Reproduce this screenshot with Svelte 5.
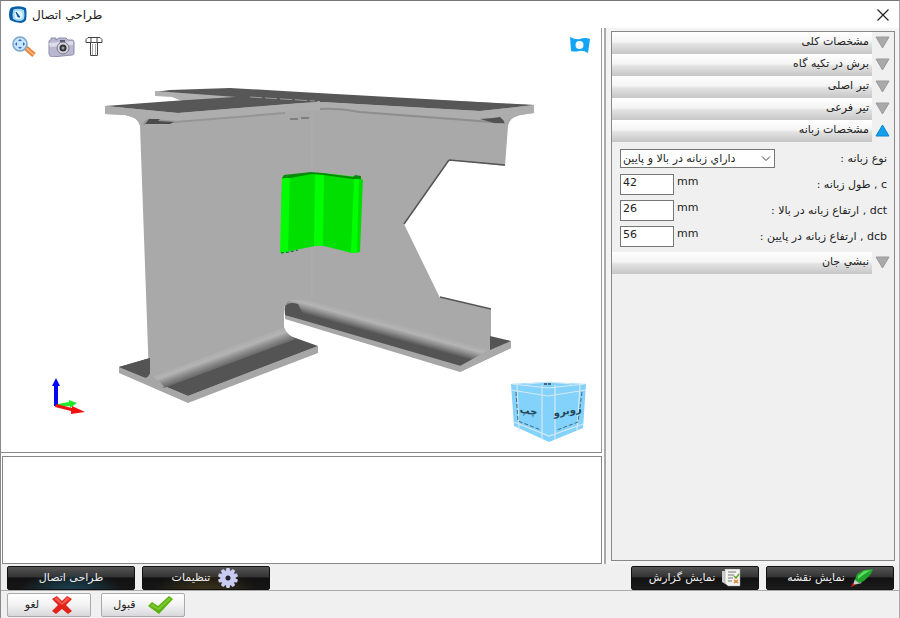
<script>
  let sections = $state([
    { title: 'مشخصات کلی', open: false },
    { title: 'برش در تکیه گاه', open: false },
    { title: 'تیر اصلی', open: false },
    { title: 'تیر فرعی', open: false },
    { title: 'مشخصات زبانه', open: true, form: true },
    { title: 'نبشي جان', open: false }
  ]);

  let fields = $state([
    { id: 'c', label: 'c , طول زبانه :', value: '42' },
    { id: 'dct', label: 'dct , ارتفاع زبانه در بالا :', value: '26' },
    { id: 'dcb', label: 'dcb , ارتفاع زبانه در پایین :', value: '56' }
  ]);

  const teeth = [0, 36, 72, 108, 144, 180, 216, 252, 288, 324];
</script>

<div class="window">
  <header class="titlebar">
    <svg class="logo" width="18" height="18" viewBox="0 0 18 18" aria-hidden="true">
      <path d="M4 1q7-2 13 1 1 6 0 12-2 3-5 3-6 0-11-3-2-5 0-11 1-2 3-2z" fill="#0c5da5" />
      <path d="M6 3q5-1 9 1 1 5 0 9-2 2-4 2-4 0-7-2-1-4 0-8 0-2 2-2z" fill="#9fdcfa" />
      <path d="M6 5q4-1 7 1 1 4 0 6-4 2-7 0-1-4 0-7z" fill="#e6f8ff" />
      <path d="M7 6l4 5-2 0z" fill="#0c5da5" stroke="#0c5da5" />
    </svg>
    <h1>طراحي اتصال</h1>
    <button class="close" aria-label="بستن">
      <svg width="12" height="12" viewBox="0 0 12 12"><path d="M.5.5l11 11M11.5.5l-11 11" stroke="#222" stroke-width="1.2" /></svg>
    </button>
  </header>

  <main class="workspace">
    <div class="left">
      <section class="viewport">
        <svg class="scene" viewBox="1 28 600 424" preserveAspectRatio="xMinYMin meet" aria-hidden="true">
          <defs>
            <linearGradient id="filletL" gradientUnits="userSpaceOnUse" x1="216" y1="350" x2="223" y2="369">
              <stop offset="0" stop-color="#a9a9a9" /><stop offset=".35" stop-color="#b4b4b4" />
              <stop offset=".6" stop-color="#8c8c8c" /><stop offset="1" stop-color="#545454" />
            </linearGradient>
            <linearGradient id="filletR" gradientUnits="userSpaceOnUse" x1="389" y1="321" x2="384" y2="339">
              <stop offset="0" stop-color="#a9a9a9" /><stop offset=".3" stop-color="#b4b4b4" />
              <stop offset=".55" stop-color="#8c8c8c" /><stop offset=".85" stop-color="#545454" />
            </linearGradient>
          </defs>

          <!-- secondary beam -->
          <path d="M285 312L460 364L511 341V348L460 372L285 319z" fill="#a6a6a6" />
          <path d="M182 101L230 92L320 94L534 105V113L520 115Q510 117 508 126L505 166L449 160L404 224L440 298L491 309L490 350L478 356L300 308L285 302L284 120H182Z" fill="#a9a9a9" />
          <path d="M290 299L302 298L490 348L480 356L461 366L285 315Q283 302 290 300z" fill="url(#filletR)" />
          <path d="M286 306Q289 301 298 304L306 320L285 315z" fill="#545454" />
          <path d="M440 297L491 309V336L440 320z" fill="#a9a9a9" />
          <path d="M478 356L490 349L511 341V348L460 372V366z" fill="#a9a9a9" />
          <path d="M490 336L511 341L490 350z" fill="#545454" />
          <path d="M155 92L170 90L230 88L300 92L534 105L480 111L320 102L250 102z" fill="#575757" />
          <path d="M155 91L182 93L250 98L215 101H182L172 97L155 96z" fill="#b0b0b0" />

          <!-- main beam -->
          <path d="M119 367L188 396L318 346V353L188 403L119 373z" fill="#a6a6a6" />
          <path d="M119 367L150 358V376L290 336L318 346L188 396z" fill="#545454" />
          <path d="M105 106L178 112L320 101V300H290Q284 303 284 311V328Q285 334 292 337L160 384L149 377L140 126Q138 117 125 115L105 114z" fill="#a9a9a9" />
          <path d="M149 378L284 327Q287 335 296 339L164 388z" fill="url(#filletL)" />
          <path d="M150 358V374Q149 378 144 377L119 367z" fill="#545454" />
          <path d="M149 374Q149 378 143 378L165 388L160 382L151 375z" fill="#a6a6a6" />
          <path d="M105 106L172 101L250 96L320 99L316 102L178 113z" fill="#575757" />
          <path d="M105 106L178 113L300 103L324 102L480 111L534 105V113L520 115L500 123L480 120L330 109L285 112L150 126L138 119L125 115L105 114z" fill="#adadad" />
          <path d="M312 112V298" stroke="#aeaeae" stroke-width="1" />
          <path d="M144 125Q145 119 153 120L176 122L285 113" fill="none" stroke="#959595" stroke-width="2" />
          <path d="M146 123L149 119H160L158 121L174 122L170 124H145z" fill="#4b4b4b" />
          <path d="M320 109Q340 108 360 112L505 123" fill="none" stroke="#8e8e8e" stroke-width="2" />
          <path d="M480 119L493 118L500 117L504 121V123H494z" fill="#515151" />
          <path d="M250 97L315 101" stroke="#999" stroke-width="1" stroke-dasharray="12 3" />
          <path d="M290 119H298M301 118H309" stroke="#555" stroke-width="1" />
          <path d="M449 160L404 224M449 160L505 165M440 297L491 309" fill="none" stroke="#555" stroke-width="1.5" />

          <!-- web angle -->
          <path d="M282 178L311 173L323 173L358 177L363 180L360 252L352 253L324 246H315L281 253z" fill="#00df00" />
          <path d="M282 179L290 177L288 252L280 253zM315 174H324L323 246H314zM354 177H359L357 253H351z" fill="#0f0" />
          <path d="M282 178L284 175L311 172L322 173L353 177L355 175L361 176V179L353 179L323 175L312 174L290 178z" fill="#078b07" />
          <path d="M281 253L290 252L298 250" fill="none" stroke="#063" stroke-dasharray="3 2" />

          <!-- axes -->
          <path d="M58 404L69 402V400L77 403L70 408V406L58 407z" fill="#1eea28" />
          <path d="M54 406V386H52L56 378L60 386H58V406z" fill="#0008f0" />
          <path d="M56 404L72 408V406L85 412L71 414V411L55 407z" fill="#f01010" />

          <!-- view cube -->
          <path d="M511 384L548 382L586 384L583 428L549 442L514 426z" fill="#82d2fc" />
          <path d="M511 390L548 396L586 390M517 384L519 431M542 385V440M555 385V440M580 385L577 431M514 422L549 436L583 424M512 384L548 388L585 384M526 384L548 382L572 384" fill="none" stroke="#d5e9f0" stroke-width="1.2" />
          <path d="M516 392L518 421L541 430M582 392L578 422L557 430" fill="none" stroke="#456b7c" stroke-dasharray="4 2" />
          <path d="M544 384h8" stroke="#345" stroke-width="1.5" stroke-dasharray="3 1" />
          <text x="528" y="414" text-anchor="middle" transform="rotate(10 528 414)">چپ</text>
          <text x="568" y="414" text-anchor="middle" transform="rotate(-10 568 414)">روبرو</text>
        </svg>

        <div class="tools">
          <button aria-label="بزرگنمایی">
            <svg width="26" height="22" viewBox="0 0 26 22">
              <path d="M15 12l8 7" stroke="#e8843b" stroke-width="5" /><path d="M15 12l8 7" stroke="#ffc08a" stroke-width="1.5" />
              <circle cx="9" cy="8" r="7" fill="#c5e5fb" stroke="#7aa3cc" stroke-width="1.5" />
              <path d="M9 3l2 2H7zM9 13l2-2H7zM4 8l2-2v4zM14 8l-2-2v4z" fill="#3565bd" />
            </svg>
          </button>
          <button aria-label="تصویر">
            <svg width="28" height="20" viewBox="0 0 28 20">
              <path d="M2 4q0-1 2-1V1h5v2l3-2h7l2 2h4q2 0 2 2v11q0 2-2 2L5 20q-2 0-3-3z" fill="#b9b8d0" stroke="#8d8ca8" />
              <path d="M2 6l24-2v4L3 10z" fill="#dcdcea" /><path d="M13 3h5v2h-5z" fill="#58586e" />
              <circle cx="16" cy="11" r="6" fill="#d4d4dc" stroke="#77778b" /><circle cx="16" cy="11" r="3.5" fill="#333" />
              <circle cx="16" cy="11" r="1.5" fill="#91a6ad" />
            </svg>
          </button>
          <button aria-label="پیچ">
            <svg width="18" height="20" viewBox="0 0 18 20">
              <path d="M3 .5h12l2 2v3H1v-3zM6 1v5M12 1v5M5.500 5.500v13h7v-13" fill="#fff" stroke="#444" /><path d="M7.500 7v11M10.500 7v11" stroke="#aaa" />
            </svg>
          </button>
        </div>

        <button class="flag" aria-label="نما">
          <svg width="20" height="18" viewBox="0 0 20 18">
            <path d="M0 1q6 3 10 2 5-2 10 0l-2 14q-5-3-9-2t-8 0z" fill="#12a5f5" /><circle cx="9.500" cy="9" r="4" fill="#f4fcff" />
          </svg>
        </button>
      </section>
      <section class="output" aria-label="پیام ها"></section>
    </div>

    <aside class="side">
      <div class="accordion" dir="rtl">
        {#each sections as s}
          <button class="head" aria-expanded={s.open} onclick={() => (s.open = !s.open)}>
            <svg width="15" height="13" viewBox="0 0 15 13" aria-hidden="true">
              {#if s.open}
                <path d="M7.500 1L14 12H1z" fill="#12a0ee" stroke="#0c84cc" stroke-linejoin="round" />
              {:else}
                <path d="M1 1h13L7.500 12z" fill="#a9a9a9" stroke="#9a9a9a" stroke-linejoin="round" />
              {/if}
            </svg>
            <span>{s.title}</span>
          </button>
          {#if s.form && s.open}
            <div class="form">
              <div class="row">
                <label for="kind">نوع زبانه :</label>
                <div class="pick" dir="ltr">
                  <select id="kind">
                    <option>داراي زبانه در بالا و پایین</option>
                    <option>بدون زبانه</option>
                  </select>
                  <svg width="10" height="6" viewBox="0 0 10 6" aria-hidden="true"><path d="M1 .5l4 4 4-4" fill="none" stroke="#444" /></svg>
                </div>
              </div>
              {#each fields as f}
                <div class="row">
                  <label for={f.id}>{f.label}</label>
                  <div class="measure" dir="ltr">
                    <input id={f.id} type="text" bind:value={f.value} />
                    <span>mm</span>
                  </div>
                </div>
              {/each}
            </div>
          {/if}
        {/each}
      </div>
    </aside>
  </main>

  <nav class="actions">
    <button class="dark blue"><span>طراحی اتصال</span></button>
    <button class="dark amber">
      <span>تنظیمات</span>
      <svg width="24" height="20" viewBox="-12 -10 24 20" aria-hidden="true">
        {#each teeth as a}
          <path d="M-1.500-10h3l1 4h-5z" fill="#c9cbf0" transform="rotate({a})" />
        {/each}
        <circle r="7" fill="#c9cbf0" /><circle r="2.500" fill="#22222c" />
      </svg>
    </button>
    <span class="spacer"></span>
    <button class="dark">
      <span>نمایش گزارش</span>
      <svg width="20" height="19" viewBox="0 0 20 19" aria-hidden="true">
        <path d="M1 2h15v14H6l-5-3z" fill="#ccc" /><path d="M4 0h15v17H7l-3-3z" fill="#f2f2ee" stroke="#999" stroke-width=".5" />
        <path d="M7 3h8M7 6h6M7 9h5M7 12h4" stroke="#777" /><path d="M13 7l2 2 3-4" fill="none" stroke="#6aa63a" stroke-width="1.5" />
        <path d="M13 11l4 3m0-3l-4 3" stroke="#e8792c" stroke-width="1.5" />
      </svg>
    </button>
    <button class="dark">
      <span>نمایش نقشه</span>
      <svg width="22" height="18" viewBox="0 0 22 18" aria-hidden="true">
        <path d="M2 16l2-6 7 4z" fill="#ccc" /><path d="M0 18l2-4 2 2z" fill="#e22" />
        <path d="M4 11L6 5q3-2 7-4l9-1-2 5-7 7-5 2z" fill="#1fa52b" /><path d="M7 7l6-5 7-1-8 5-5 4z" fill="#62dc62" />
      </svg>
    </button>
  </nav>

  <footer>
    <button class="light">
      <span>لغو</span>
      <svg width="22" height="18" viewBox="0 0 22 18" aria-hidden="true">
        <path d="M1 3l5-3 5 5 5-5 5 3-6 6 6 6-4 3-6-5-6 5-4-3 6-6z" fill="#e2231a" /><path d="M3 3l3-2 5 6 5-6 3 2-8 6z" fill="#f5584c" />
      </svg>
    </button>
    <button class="light">
      <span>قبول</span>
      <svg width="25" height="18" viewBox="0 0 25 18" aria-hidden="true">
        <path d="M0 10l4-4 6 4L21 0l4 3-14 15z" fill="#5fb112" /><path d="M2 10l3-2 5 4L21 2l2 1-12 11z" fill="#79c92b" />
      </svg>
    </button>
  </footer>
</div>

<style>
  :global(body) { margin: 0; }
  .window {
    display: flex;
    flex-direction: column;
    box-sizing: border-box;
    min-height: 100vh;
    border-top: 1px solid #777;
    border-left: 1px solid #888;
    border-right: 1px solid #aaa;
    background: #f0f0f0;
    color: #222;
    font: 11px/16px "DejaVu Sans", sans-serif;
  }
  button, input, select { font: inherit; color: inherit; margin: 0; }
  button { padding: 0; border: 0; background: none; cursor: pointer; }
  svg { display: block; flex: none; }

  .titlebar { display: flex; align-items: center; gap: 5px; height: 27px; padding: 0 10px 0 8px; background: #fff; }
  h1 { flex: 1; margin: 0; font-size: 12px; font-weight: 400; line-height: 20px; }

  .workspace { display: flex; flex: 1; background: #fff; }
  .left { display: flex; flex: 1; flex-direction: column; gap: 3px; min-width: 0; }
  .viewport { position: relative; display: flex; flex: 1; border-right: 1px solid #999; border-bottom: 1px solid #888; background: #fff; }
  .scene { flex: 1; width: 100%; min-width: 0; height: auto; }
  .scene text { font: bold 10px "DejaVu Sans", sans-serif; fill: #244554; }
  .tools { position: absolute; top: 8px; left: 10px; display: flex; align-items: center; gap: 10px; }
  .flag { position: absolute; top: 8px; right: 11px; }
  .output { height: 106px; margin-left: 1px; border: 1px solid #888; background: #fff; }

  .side { display: flex; box-sizing: border-box; width: 295px; margin-left: 2px; padding: 3px 4px 3px 5px; border-left: 2px solid #aaa; background: #f4f4f4; }
  .accordion { flex: 1; border: 1px solid #888; background: #f0f0f0; }
  .head { display: flex; align-items: flex-start; width: 100%; height: 22px; padding-right: 4px; gap: 3px; text-align: right; }
  .head svg { margin-top: 4px; }
  .head span { flex: 1; height: 18px; padding: 0 3px 4px; line-height: 20px; background: linear-gradient(#fff, #f4f4f4 45%, #e2e2e2 55%, #c6c6c6); }

  .form { display: flex; flex-direction: column; gap: 5px; padding: 6px 7px 5px 8px; }
  .row { display: flex; align-items: center; justify-content: space-between; height: 21px; }
  .pick { position: relative; display: flex; }
  select { appearance: none; width: 155px; height: 19px; padding: 0 20px 0 2px; border: 1px solid #777; border-radius: 0; background: #fff; }
  .pick svg { position: absolute; top: 7px; right: 4px; pointer-events: none; }
  .measure { display: flex; gap: 3px; }
  input { box-sizing: border-box; width: 54px; height: 21px; padding: 0 2px 4px; border: 1px solid #777; background: #fff; }

  .actions { display: flex; align-items: flex-end; gap: 7px; height: 26px; padding: 0 5px 0 6px; border-bottom: 1px solid #aaa; }
  .spacer { flex: 1; }
  .dark, .light { display: flex; align-items: center; justify-content: center; box-sizing: border-box; height: 24px; border-radius: 2px; }
  .dark { gap: 6px; width: 128px; border: 1px solid #111; background: linear-gradient(#555, #333 45%, #111 50%, #1c1c1c); color: #eee; }
  .blue { background: radial-gradient(ellipse at 50% 120%, #1c4a5e, transparent 60%), linear-gradient(#555, #333 45%, #111 50%, #161616); }
  .amber { background: radial-gradient(ellipse at 50% 120%, #43381c, transparent 60%), linear-gradient(#555, #333 45%, #111 50%, #161616); }
  footer { display: flex; align-items: center; gap: 10px; height: 27px; padding: 0 6px; }
  .light { gap: 12px; width: 84px; border: 1px solid #aaa; background: linear-gradient(#fff, #f2f2f2 50%, #d8d8dc); }
</style>
